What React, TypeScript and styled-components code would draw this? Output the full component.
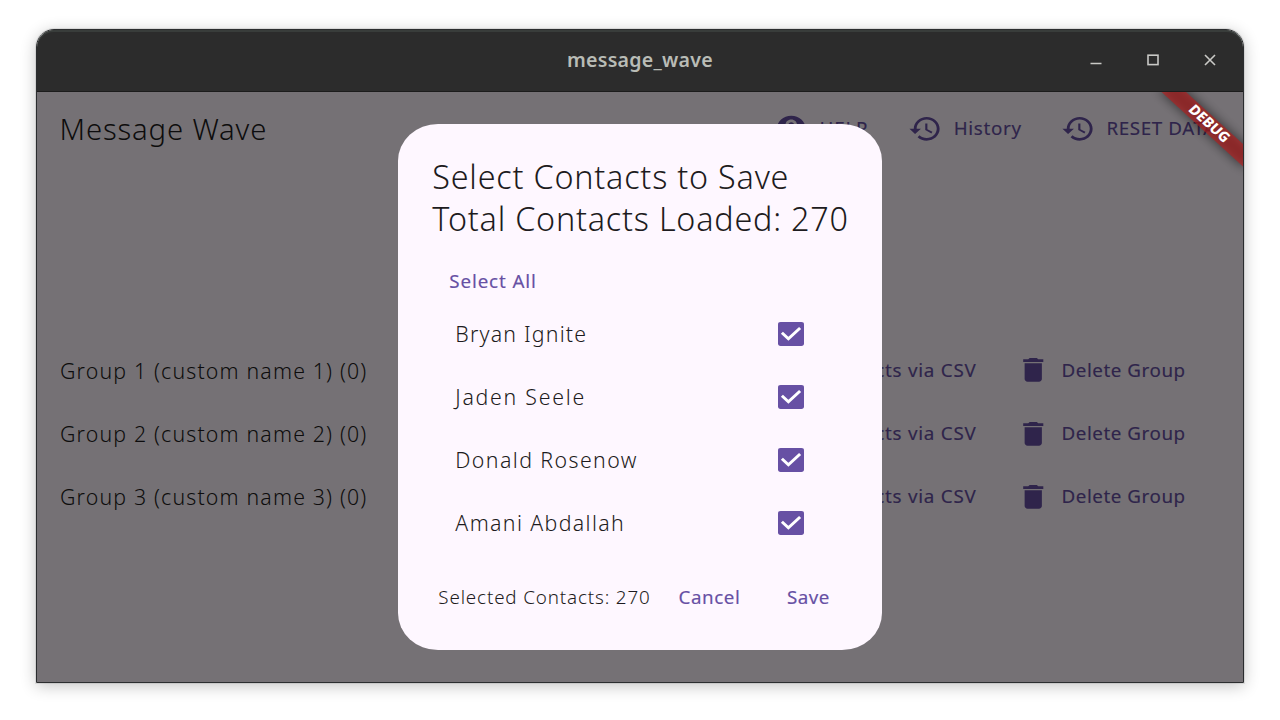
import React from "react";
import styled, { createGlobalStyle } from "styled-components";

const GlobalStyle = createGlobalStyle`
  * { box-sizing: border-box; }
  body {
    margin: 0;
    background: #fff;
    font-family: "Noto Sans", "Open Sans", sans-serif;
  }
`;

const Desktop = styled.div`
  height: 720px;
  padding: 29px 36px 37px;
  overflow: hidden;
`;

const Window = styled.div`
  display: flex;
  flex-direction: column;
  height: 654px;
  border: 1px solid #2b2d2f;
  border-radius: 18px 18px 0 0;
  overflow: hidden;
  box-shadow: 0 0 0 1px rgba(0, 0, 0, 0.08), 0 3px 16px rgba(0, 0, 0, 0.24);
`;

const TitleBar = styled.header`
  position: relative;
  display: flex;
  flex: none;
  align-items: center;
  justify-content: center;
  height: 62px;
  border-radius: 17px 17px 0 0;
  background: #2c2c2c;
  box-shadow: inset 0 2px 0 #393d3b, inset 0 -1px 0 #1c1c1c;
`;

const WindowTitle = styled.span`
  padding-bottom: 3px;
  color: #b9bcb6;
  font-size: 19.6px;
  font-weight: 600;
  letter-spacing: 0.24px;
`;

const WindowControls = styled.div`
  position: absolute;
  top: 0;
  right: 26px;
  display: flex;
  align-items: center;
  gap: 43px;
  height: 60px;
`;

const ControlIcon = styled.svg`
  width: 14px;
  height: 14px;
  fill: none;
  stroke: #c9c9c6;
`;

const Content = styled.main`
  position: relative;
  flex: 1;
  overflow: hidden;
  background: #fef7ff;
`;

const AppBar = styled.div`
  display: flex;
  align-items: center;
  justify-content: space-between;
  height: 74px;
  padding-left: 22.5px;
  white-space: nowrap;
`;

const AppTitle = styled.h1`
  margin: 0;
  padding-bottom: 1px;
  color: #1d1b20;
  font-size: 29.3px;
  font-weight: 300;
  line-height: 38px;
  letter-spacing: 0.84px;
`;

const Actions = styled.div`
  display: flex;
`;

const Action = styled.div<{ $width?: number }>`
  display: flex;
  align-items: center;
  gap: 11.5px;
  width: ${(p) => (p.$width ? `${p.$width}px` : "auto")};
  color: #6750a4;
`;

const Glyph = styled.svg`
  flex: none;
  width: 34.5px;
  height: 31.6px;
  margin-bottom: 0.6px;
  fill: currentColor;
`;

const Label = styled.span<{ $spacing: number }>`
  padding-bottom: 2px;
  color: #6750a4;
  font-size: 18.8px;
  font-weight: 400;
  line-height: 24px;
  letter-spacing: ${(p) => p.$spacing}px;
  white-space: nowrap;
  -webkit-text-stroke: 0.15px currentColor;
`;

const GroupList = styled.div`
  padding-top: 173px;
`;

const GroupRow = styled.div`
  display: flex;
  align-items: center;
  justify-content: space-between;
  height: 63.1px;
  padding-left: 23px;
`;

const BodyText = styled.span<{ $spacing: number; $size?: number }>`
  padding-bottom: ${(p) => (p.$size ? 2 : 0)}px;
  color: #1d1b20;
  font-size: ${(p) => p.$size ?? 21.3}px;
  font-weight: 300;
  line-height: 28px;
  letter-spacing: ${(p) => p.$spacing}px;
  white-space: nowrap;
`;

const RowActions = styled.div`
  display: flex;
  gap: 39px;
`;

const Scrim = styled.div`
  position: absolute;
  inset: 0;
  display: flex;
  align-items: center;
  justify-content: center;
  background: rgba(0, 0, 0, 0.54);
`;

const Dialog = styled.section`
  display: flex;
  flex-direction: column;
  width: 484.4px;
  height: 526.6px;
  padding: 31px 34.5px;
  border-radius: 40px / 37px;
  background: #fef7ff;
`;

const DialogTitle = styled.h2`
  margin: 0 0 21.6px;
  color: #1d1b20;
  font-size: 32.3px;
  font-weight: 300;
  line-height: 42px;
  white-space: nowrap;
`;

const TitleLine = styled.div<{ $spacing: number }>`
  letter-spacing: ${(p) => p.$spacing}px;
`;

const SelectAll = styled.div`
  display: flex;
  align-items: center;
  height: 42px;
  padding: 2px 0 0 17px;
`;

const ContactRow = styled.div`
  display: flex;
  flex: none;
  align-items: center;
  justify-content: space-between;
  height: 63.1px;
  padding: 0 43.4px 0 23px;
`;

const CheckBox = styled.svg`
  width: 26px;
  height: 24px;
`;

const DialogFooter = styled.footer`
  display: flex;
  align-items: center;
  height: 42px;
  margin-top: 22px;
  padding-left: 6px;
`;

const FooterButton = styled.div<{ $left: number }>`
  display: flex;
  margin-left: ${(p) => p.$left}px;
`;

const RibbonCorner = styled.div`
  position: absolute;
  top: 0;
  right: 0;
  width: 0;
  height: 0;
  transform: scale(1.44, 1.315) rotate(45deg);
`;

const Ribbon = styled.div`
  position: absolute;
  top: 28px;
  left: -40px;
  width: 80px;
  height: 12px;
  color: #fff;
  font-size: 10.4px;
  font-weight: 800;
  line-height: 11.4px;
  text-align: center;
  text-indent: 0.8px;

  &::before,
  &::after {
    content: "";
    position: absolute;
    inset: 0;
    z-index: -1;
    background: rgba(183, 28, 28, 0.63);
  }

  &::before {
    background: rgba(0, 0, 0, 0.5);
    box-shadow: 0 0 0 0.5px rgba(0, 0, 0, 0.5);
    filter: blur(4px);
  }
`;

const HISTORY =
  "M13 3c-4.97 0-9 4.03-9 9H1l3.89 3.89.07.14L9 12H6c0-3.87 3.13-7 7-7s7 3.13 7 7-3.13 7-7 7c-1.93 0-3.68-.79-4.94-2.06l-1.42 1.42C8.27 19.99 10.51 21 13 21c4.97 0 9-4.03 9-9s-4.03-9-9-9zm-1 5v5l4.28 2.54.72-1.21-3.5-2.08V8H12z";
const HELP =
  "M12 2C6.48 2 2 6.48 2 12s4.48 10 10 10 10-4.48 10-10S17.52 2 12 2zm1 17h-2v-2h2v2zm2.07-7.75l-.9.92C13.45 12.9 13 13.5 13 15h-2v-.5c0-1.1.45-2.1 1.17-2.83l1.24-1.26c.37-.36.59-.86.59-1.41 0-1.1-.9-2-2-2s-2 .9-2 2H8c0-2.21 1.79-4 4-4s4 1.79 4 4c0 .88-.36 1.68-.93 2.25z";
const TRASH =
  "M6 19c0 1.1.9 2 2 2h8c1.1 0 2-.9 2-2V7H6v12zM19 4h-3.5l-1-1h-5l-1 1H5v2h14V4z";

function Icon({ path }: { path: string }) {
  return (
    <Glyph viewBox="0 0 24 24" preserveAspectRatio="none">
      <path d={path} />
    </Glyph>
  );
}

const toolbar = [
  { label: "HELP", icon: HELP, width: 134.2, spacing: 0.8 },
  { label: "History", icon: HISTORY, width: 152.8, spacing: 0.7 },
  { label: "RESET DATA", icon: HISTORY, width: 182.5, spacing: 0.6 },
];

const groups = [1, 2, 3];

const contacts = [
  { name: "Bryan Ignite", spacing: 1.2 },
  { name: "Jaden Seele", spacing: 1.75 },
  { name: "Donald Rosenow", spacing: 1.42 },
  { name: "Amani Abdallah", spacing: 1.38 },
];

export default function App() {
  return (
    <>
      <GlobalStyle />
      <Desktop>
        <Window>
          <TitleBar>
            <WindowTitle>message_wave</WindowTitle>
            <WindowControls>
              <ControlIcon viewBox="0 0 14 14">
                <path d="M1.5 10.5H12.5" strokeWidth="1.5" />
              </ControlIcon>
              <ControlIcon viewBox="0 0 14 14">
                <rect x="2" y="2.2" width="10" height="9.4" strokeWidth="1.6" />
              </ControlIcon>
              <ControlIcon viewBox="0 0 14 14">
                <path d="M2 2L12 12M12 2L2 12" strokeWidth="1.6" />
              </ControlIcon>
            </WindowControls>
          </TitleBar>
          <Content>
            <AppBar>
              <AppTitle>Message Wave</AppTitle>
              <Actions>
                {toolbar.map((t) => (
                  <Action key={t.label} $width={t.width}>
                    <Icon path={t.icon} />
                    <Label $spacing={t.spacing}>{t.label}</Label>
                  </Action>
                ))}
              </Actions>
            </AppBar>
            <GroupList>
              {groups.map((n) => (
                <GroupRow key={n}>
                  <BodyText $spacing={1.17}>
                    {`Group ${n} (custom name ${n}) (0)`}
                  </BodyText>
                  <RowActions>
                    <Action>
                      <Label $spacing={0.75}>Contacts via CSV</Label>
                    </Action>
                    <Action $width={227.5}>
                      <Icon path={TRASH} />
                      <Label $spacing={0.55}>Delete Group</Label>
                    </Action>
                  </RowActions>
                </GroupRow>
              ))}
            </GroupList>
            <Scrim>
              <Dialog>
                <DialogTitle>
                  <TitleLine $spacing={0.8}>Select Contacts to Save</TitleLine>
                  <TitleLine $spacing={0.79}>Total Contacts Loaded: 270</TitleLine>
                </DialogTitle>
                <SelectAll>
                  <Label $spacing={0.87}>Select All</Label>
                </SelectAll>
                {contacts.map((c) => (
                  <ContactRow key={c.name}>
                    <BodyText $spacing={c.spacing}>{c.name}</BodyText>
                    <CheckBox viewBox="0 0 18 18" preserveAspectRatio="none">
                      <rect width="18" height="18" rx="1.8" fill="#6750a4" />
                      <path
                        d="M2.7 8.1L7.2 12.6L15.3 4.5"
                        fill="none"
                        stroke="#fff"
                        strokeWidth="2"
                      />
                    </CheckBox>
                  </ContactRow>
                ))}
                <DialogFooter>
                  <BodyText $spacing={0.86} $size={18.8}>
                    Selected Contacts: 270
                  </BodyText>
                  <FooterButton $left={28}>
                    <Label $spacing={0.55}>Cancel</Label>
                  </FooterButton>
                  <FooterButton $left={46.5}>
                    <Label $spacing={0.45}>Save</Label>
                  </FooterButton>
                </DialogFooter>
              </Dialog>
            </Scrim>
            <RibbonCorner>
              <Ribbon>DEBUG</Ribbon>
            </RibbonCorner>
          </Content>
        </Window>
      </Desktop>
    </>
  );
}
